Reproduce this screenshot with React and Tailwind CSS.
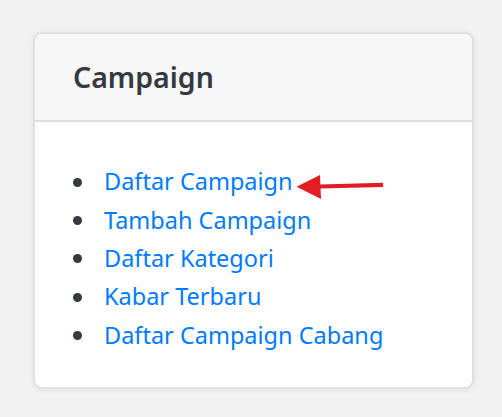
import React from "react";

const links = [
  "Daftar Campaign",
  "Tambah Campaign",
  "Daftar Kategori",
  "Kabar Terbaru",
  "Daftar Campaign Cabang",
];

const Arrow = () => (
  <svg
    className="absolute left-[295px] top-[172px]"
    width="92"
    height="30"
    viewBox="0 0 92 30"
  >
    <path d="M25 12.4 L88 10.8 L88.2 15 L25 16.6 Z" fill="#e21d23" />
    <path d="M1.5 14.8 L25 3 L26 27 Z" fill="#e21d23" />
  </svg>
);

const App = () => {
  return (
    <div
      className="relative w-[502px] h-[417px] bg-[#f2f2f2] pt-[32px] pl-[33px]"
      style={{ fontFamily: '"Noto Sans", "Open Sans", sans-serif' }}
    >
      <div className="w-[441px] h-[357px] bg-white border-2 border-[#e0e0e0] rounded-[9px] shadow-[0_1px_6px_rgba(0,0,0,0.08)] overflow-hidden">
        {/* ===== Header ===== */}
        <div className="h-[88px] bg-[#f7f7f7] border-b-2 border-[#dedede] flex items-center pl-[38px]">
          <h5 className="text-[28.5px] font-semibold text-[#343a40] leading-none">
            Campaign
          </h5>
        </div>

        {/* ===== Body ===== */}
        <div className="pt-[41px] pl-[38px]">
          <ul>
            {links.map((l) => (
              <li key={l} className="flex items-center h-[38.3px]">
                <span className="w-[9px] h-[9px] rounded-full bg-[#343a40] mr-[22px] shrink-0" />
                <a href="#" className="text-[23.5px] leading-none text-[#007bff]">
                  {l}
                </a>
              </li>
            ))}
          </ul>
        </div>
      </div>
      <Arrow />
    </div>
  );
};

export default App;
